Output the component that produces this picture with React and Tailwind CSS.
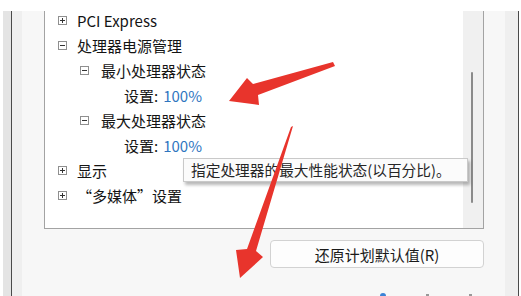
import React from "react";

const rows = [
  { level: 0, box: "+", label: "PCI Express" },
  { level: 0, box: "-", label: "处理器电源管理" },
  { level: 1, box: "-", label: "最小处理器状态" },
  { level: 2, setting: "100%" },
  { level: 1, box: "-", label: "最大处理器状态" },
  { level: 2, setting: "100%" },
  { level: 0, box: "+", label: "显示" },
  { level: 0, box: "+", label: "“多媒体”设置" },
];

function ExpandBox({ sign }) {
  return (
    <span className="relative inline-block w-[9px] h-[9px] border border-[#8f8f8f] bg-white shrink-0">
      <span className="absolute left-[1px] top-[3px] w-[5px] h-[1px] bg-[#333]" />
      {sign === "+" && (
        <span className="absolute left-[3px] top-[1px] w-[1px] h-[5px] bg-[#333]" />
      )}
    </span>
  );
}

function TreeRow({ row }) {
  if (row.setting) {
    return (
      <div className="h-[25px] flex items-center pl-[79px]">
        <span>设置:</span>
        <span className="ml-[5px] text-[#2f76bf]">{row.setting}</span>
      </div>
    );
  }
  const pad = row.level === 0 ? "pl-[13px] gap-[10px]" : "pl-[35px] gap-[12px]";
  return (
    <div className={`h-[25px] flex items-center ${pad}`}>
      <ExpandBox sign={row.box} />
      <span>{row.label}</span>
    </div>
  );
}

export default function App() {
  return (
    <div className="relative w-[521px] h-[296px] overflow-hidden bg-white pt-[11px] text-[#141414] font-['Noto_Sans_CJK_SC','Noto_Sans',sans-serif]">
      <div className="flex h-[285px] pl-[3px]">
        <div className="w-[8px] bg-[#e4e4e4]" />
        <div className="w-[508px] flex border-x border-[#4a4a4a] bg-[#f7f7f7]">
          <div className="w-[10px] bg-[#efefef]" />
          <div className="w-[483px] pl-[22px] pr-[21px] flex flex-col">
            {/* list box */}
            <div className="h-[218px] flex border-x border-b border-[#a3a3a3] bg-white overflow-hidden">
              <div className="flex-1 -mt-[3px] text-[15px] leading-none">
                {rows.map((r, i) => (
                  <TreeRow key={i} row={r} />
                ))}
              </div>
              <div className="w-[20px] bg-[#f0f0f0]">
                <div className="ml-[8px] mt-[61px] w-[2px] h-[131px] rounded-full bg-[#8a8a8a]" />
              </div>
            </div>
            <div className="mt-[11px] flex justify-end">
              <button className="w-[214px] h-[28px] rounded-[4px] border border-[#d2d2d2] bg-[#fdfdfd] text-[15px] leading-none text-[#1a1a1a]">
                还原计划默认值(R)
              </button>
            </div>
            <div className="mt-auto h-[4px] flex items-end pl-[336px] gap-[40px]">
              <span className="w-[6px] h-[3px] bg-[#3b82d6] rounded-t-full" />
              <span className="w-[3px] h-[2px] bg-[#999]" />
              <span className="w-[3px] h-[2px] bg-[#999]" />
            </div>
          </div>
          <div className="w-[13px] bg-[#efefef]" />
        </div>
      </div>

      {/* tooltip */}
      <div className="absolute left-[183px] top-[158px] w-[285px] h-[24px] flex items-center pl-[7px] border border-[#c9c9c9] bg-[#fbfbfb] text-[14.7px] leading-none text-[#262626] shadow-[2px_3px_3px_rgba(0,0,0,0.28)]">
        指定处理器的最大性能状态(以百分比)。
      </div>

      {/* red arrows */}
      <svg className="absolute inset-0 pointer-events-none" width="521" height="296" viewBox="0 0 521 296">
        <polygon
          points="333,62 253,84 247,78 229,101 259,105 258,95 335,66"
          fill="#e8342c"
        />
        <polygon
          points="293,126 256,251 263,257 240,278 236,250 247,249 291,127"
          fill="#e8342c"
        />
      </svg>
    </div>
  );
}
